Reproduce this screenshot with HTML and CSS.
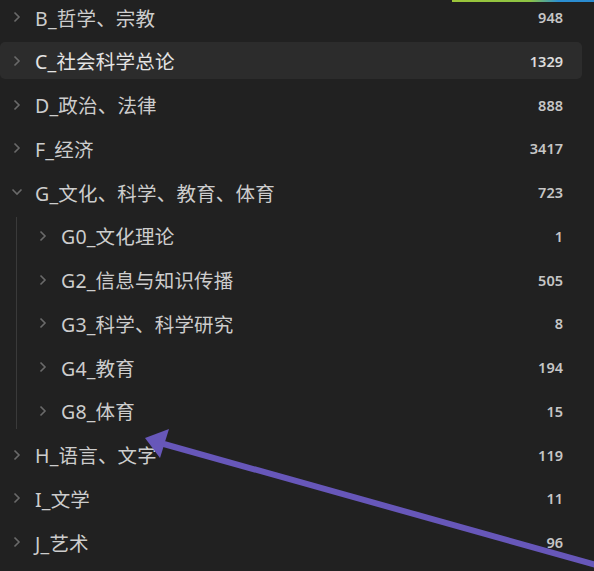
FILE: index.html
```
<!DOCTYPE html>
<html lang="zh">
<head>
<meta charset="utf-8">
<link rel="stylesheet" href="styles.css">
</head>
<body>
<div class="topbar"></div>
<div class="tree">
  <div class="row"><span class="chev"><svg width="8" height="12" viewBox="0 0 8 12"><polyline points="1.5,1.5 6,6 1.5,10.5"/></svg></span><span class="label">B_哲学、宗教</span><span class="count">948</span></div>
  <div class="row active"><span class="chev"><svg width="8" height="12" viewBox="0 0 8 12"><polyline points="1.5,1.5 6,6 1.5,10.5"/></svg></span><span class="label">C_社会科学总论</span><span class="count">1329</span></div>
  <div class="row"><span class="chev"><svg width="8" height="12" viewBox="0 0 8 12"><polyline points="1.5,1.5 6,6 1.5,10.5"/></svg></span><span class="label">D_政治、法律</span><span class="count">888</span></div>
  <div class="row"><span class="chev"><svg width="8" height="12" viewBox="0 0 8 12"><polyline points="1.5,1.5 6,6 1.5,10.5"/></svg></span><span class="label">F_经济</span><span class="count">3417</span></div>
  <div class="row"><span class="chev"><svg width="12" height="8" viewBox="0 0 12 8"><polyline points="1.5,1.5 6,6 10.5,1.5"/></svg></span><span class="label">G_文化、科学、教育、体育</span><span class="count">723</span></div>
  <div class="children">
    <div class="row child"><span class="chev"><svg width="8" height="12" viewBox="0 0 8 12"><polyline points="1.5,1.5 6,6 1.5,10.5"/></svg></span><span class="label">G0_文化理论</span><span class="count">1</span></div>
    <div class="row child"><span class="chev"><svg width="8" height="12" viewBox="0 0 8 12"><polyline points="1.5,1.5 6,6 1.5,10.5"/></svg></span><span class="label">G2_信息与知识传播</span><span class="count">505</span></div>
    <div class="row child"><span class="chev"><svg width="8" height="12" viewBox="0 0 8 12"><polyline points="1.5,1.5 6,6 1.5,10.5"/></svg></span><span class="label">G3_科学、科学研究</span><span class="count">8</span></div>
    <div class="row child"><span class="chev"><svg width="8" height="12" viewBox="0 0 8 12"><polyline points="1.5,1.5 6,6 1.5,10.5"/></svg></span><span class="label">G4_教育</span><span class="count">194</span></div>
    <div class="row child"><span class="chev"><svg width="8" height="12" viewBox="0 0 8 12"><polyline points="1.5,1.5 6,6 1.5,10.5"/></svg></span><span class="label">G8_体育</span><span class="count">15</span></div>
  </div>
  <div class="row"><span class="chev"><svg width="8" height="12" viewBox="0 0 8 12"><polyline points="1.5,1.5 6,6 1.5,10.5"/></svg></span><span class="label">H_语言、文字</span><span class="count">119</span></div>
  <div class="row"><span class="chev"><svg width="8" height="12" viewBox="0 0 8 12"><polyline points="1.5,1.5 6,6 1.5,10.5"/></svg></span><span class="label">I_文学</span><span class="count">11</span></div>
  <div class="row"><span class="chev"><svg width="8" height="12" viewBox="0 0 8 12"><polyline points="1.5,1.5 6,6 1.5,10.5"/></svg></span><span class="label">J_艺术</span><span class="count">96</span></div>
</div>
<svg class="arrow" width="594" height="571" viewBox="0 0 594 571">
  <line x1="162" y1="443.5" x2="600" y2="566" stroke="#6757b9" stroke-width="6"/>
  <polygon points="145,438 169,429 160,458" fill="#6757b9"/>
</svg>
</body>
</html>
```
FILE: styles.css
```
html, body {
  margin: 0;
  padding: 0;
  background: #212121;
  width: 594px;
  height: 571px;
  overflow: hidden;
  font-family: "Noto Sans", "Noto Sans CJK SC", sans-serif;
}
.topbar {
  position: absolute;
  top: 0;
  left: 452px;
  width: 142px;
  height: 2px;
  background: linear-gradient(90deg, #9cc53a 0%, #8dc444 55%, #2b8fd2 75%, #2a8ad0 100%);
}
.tree {
  width: 582px;
  margin-top: -1.5px;
  display: flex;
  flex-direction: column;
  gap: 6.75px;
}
.children {
  display: flex;
  flex-direction: column;
  gap: 6.75px;
  margin-left: 16px;
  border-left: 1px solid #3a3a3a;
}
.row {
  height: 37px;
  display: flex;
  align-items: center;
  padding-left: 11px;
  padding-right: 19px;
  border-radius: 5px;
  color: #cdcdcd;
}
.row.active {
  background: #2c2c2c;
  color: #e4e4e4;
}
.row.child {
  padding-left: 20px;
  padding-right: 19px;
}
.chev {
  width: 12px;
  height: 12px;
  display: flex;
  align-items: center;
  justify-content: center;
  margin-right: 12px;
}
.chev svg polyline {
  fill: none;
  stroke: #6a6a6a;
  stroke-width: 1.6;
}
.label {
  flex: 1;
  font-size: 19.5px;
  letter-spacing: 0.2px;
  white-space: nowrap;
}
.count {
  font-size: 14.5px;
  font-weight: 600;
  color: #c6c6c6;
}
.row.active .count {
  color: #dcdcdc;
}
.arrow {
  position: absolute;
  top: 0;
  left: 0;
}
```
